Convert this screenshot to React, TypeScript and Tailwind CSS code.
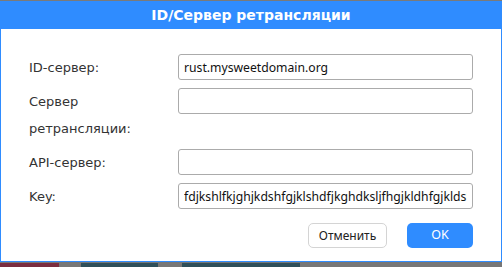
import React from 'react';

const rows = [
  { label: 'ID-сервер:', value: 'rust.mysweetdomain.org' },
  { label: 'Сервер ретрансляции:', value: '', wrap: true },
  { label: 'API-сервер:', value: '' },
  { label: 'Key:', value: 'fdjkshlfkjghjkdshfgjklshdfjkghdksljfhgjkldhfgjkldsklfjhgkdlsfhgjkd' },
];

export default function App() {
  return (
    <div className="w-[502px] h-[267px] bg-[#777777] flex flex-col overflow-hidden">
      <div className="h-px bg-[#7a7a7a]" />
      <div className="flex flex-col h-[262px]">
        <div className="h-[28px] bg-[#2f8cff] flex items-center justify-center">
          <span className="text-white font-bold text-[14px] font-['DejaVu_Sans',sans-serif]">ID/Сервер ретрансляции</span>
        </div>
        <div className="flex-1 bg-white border-x border-b-[1px] border-[#2f8cff] px-[28px] pt-[25px]">
          <div className="grid grid-cols-[149px_1fr] gap-y-[7px] items-start">
            {rows.map((r, i) => (
              <React.Fragment key={i}>
                <div className="text-[13px] leading-[27px] text-[#333333] font-['DejaVu_Sans',sans-serif]">
                  {r.wrap ? (
                    <>
                      Сервер
                      <br />
                      ретрансляции:
                    </>
                  ) : (
                    r.label
                  )}
                </div>
                <input
                  readOnly
                  defaultValue={r.value}
                  className="h-[26px] w-full border border-[#ababab] rounded-[3px] px-[5px] text-[12.2px] text-[#111111] font-['Noto_Sans',sans-serif] outline-none bg-white"
                />
              </React.Fragment>
            ))}
          </div>
          <div className="flex justify-end gap-[20px] mt-[13px]">
            <button className="w-[79px] h-[25px] border border-[#d4d4d4] rounded-[5px] bg-white text-[12px] text-[#222222] font-['Noto_Sans',sans-serif]">
              Отменить
            </button>
            <button className="w-[66px] h-[25px] rounded-[5px] bg-[#2f8cff] text-white text-[12.5px] font-['Noto_Sans',sans-serif]">
              OK
            </button>
          </div>
        </div>
      </div>
      <div className="flex h-[4px] mt-px">
        <div className="w-[59px] bg-[#7a2d40]" />
        <div className="w-[22px] bg-[#777777]" />
        <div className="w-[77px] bg-[#2f4f5a]" />
        <div className="w-[24px] bg-[#777777]" />
        <div className="w-[118px] bg-[#2f4f5a]" />
        <div className="flex-1 bg-[#777777]" />
      </div>
    </div>
  );
}
